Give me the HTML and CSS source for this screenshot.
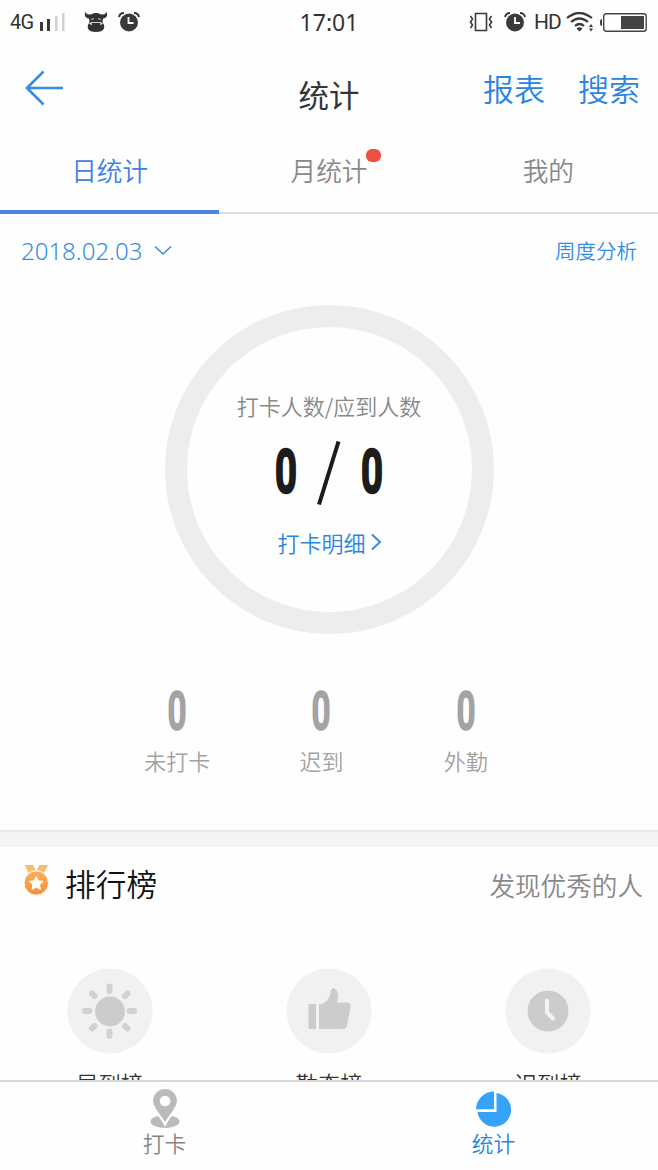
FILE: index.html
```html
<!DOCTYPE html>
<html lang="zh-CN">
<head>
<meta charset="utf-8">
<title>统计</title>
<link rel="stylesheet" href="styles.css">
</head>
<body>
<div class="app">
  <div class="status">
    <div class="status-side">
      <span class="net">4G</span>
      <svg class="signal" width="28" height="20" viewBox="0 0 28 20"><path fill="#3a3a3a" d="M1 10h3v9H1zM8 7h3v12H8z"/><path fill="#d0d0d0" d="M16 4h2.500v15H16zM23 1h2.500v18H23z"/></svg>
      <svg class="bull" width="24" height="22" viewBox="0 0 24 22"><path fill="#333" d="M1.500.500C0 4 1 7 5 7.500l.5 3.500-1.500 3C3 18 5 21 12 21s9-3 8-7l-1.500-3 .5-3.500c4-.5 5-3.500 3.500-7-.5 3-3 3-5.500 3-1.500-1-3-1.500-5-1.500s-3.500.5-5 1.500c-2.500 0-5 0-5.500-3z"/><path d="M7 8.500l3-1M14 7.500l3 1M7 11.500h10" stroke="#ccc" stroke-width="1"/><path d="M5 12l2.500-.5V14.500zM19 12l-2.500-.5V14.500z" fill="#fff"/></svg>
      <svg class="alarm" width="22" height="20" viewBox="0 0 22 20"><circle cx="11" cy="10.500" r="9" fill="#3a3a3a"/><path d="M1 5Q2 1 6 1M16 1q4 0 5 4" fill="none" stroke="#3a3a3a" stroke-width="2.200"/><path d="M10.500 5v6h5" fill="none" stroke="#fff" stroke-width="1.800"/></svg>
    </div>
    <span class="clock">17:01</span>
    <div class="status-side status-right">
      <svg class="vibrate" width="24" height="20" viewBox="0 0 24 20"><path d="M6.500 1.500h11v17h-11zM1.500 4l2 3-2 3 2 3-2 3M22.500 4l-2 3 2 3-2 3 2 3" fill="none" stroke="#3a3a3a" stroke-width="1.600"/></svg>
      <svg class="alarm-right" width="22" height="20" viewBox="0 0 22 20"><circle cx="11" cy="10.500" r="9" fill="#3a3a3a"/><path d="M1 5Q2 1 6 1M16 1q4 0 5 4" fill="none" stroke="#3a3a3a" stroke-width="2"/><path d="M11 5v6h5" fill="none" stroke="#fff" stroke-width="1.800"/></svg>
      <span class="hd">HD</span>
      <svg class="wifi" width="28" height="20" viewBox="0 0 28 20"><path d="M1 6Q13-4 26 6M5 10Q13.500 3 22 10M9 14q4.500-4 9 0" fill="none" stroke="#3a3a3a" stroke-width="2.200"/><path d="M10.500 16.500q3-2.500 6 0l-3 3zM23 15l2-3 2 3zM23 16.500l2 3 2-3z" fill="#3a3a3a"/></svg>
      <svg class="battery" width="47" height="19" viewBox="0 0 47 19"><rect x="3.700" y=".7" width="42.500" height="17.600" rx="2.500" fill="none" stroke="#444" stroke-width="1.400"/><path d="M21 3h23v13H21zM0 8q0-2 2-2v7q-2 0-2-2z" fill="#444"/></svg>
    </div>
  </div>

  <header class="header">
    <svg class="back" width="40" height="38" viewBox="0 0 40 38"><path d="M19.500 2.500L3 19l16.500 16.500M3 19h36" fill="none" stroke="#348ce3" stroke-width="2.600" stroke-linejoin="round"/></svg>
    <h1 class="title">统计</h1>
    <div class="actions"><span>报表</span><span>搜索</span></div>
  </header>

  <nav class="tabs">
    <div class="tab tab-active"><span>日统计</span></div>
    <div class="tab"><span class="tab-label">月统计<i class="dot"></i></span></div>
    <div class="tab"><span>我的</span></div>
  </nav>

  <div class="datebar">
    <span class="date">2018.02.03</span>
    <svg class="chevron" width="18" height="11" viewBox="0 0 18 11"><path d="M1 1.500l8 7.500 8-7.500" fill="none" stroke="#348ce3" stroke-width="1.500"/></svg>
    <span class="weekly">周度分析</span>
  </div>

  <section class="ring">
    <div class="ring-label">打卡人数/应到人数</div>
    <div class="ratio">
      <span class="num">0</span>
      <svg width="26" height="66" viewBox="0 0 26 66"><path d="M3 64.500L22.500 1.500" stroke="#1c1c1c" stroke-width="4"/></svg>
      <span class="num">0</span>
    </div>
    <div class="detail">打卡明细<svg width="12" height="18" viewBox="0 0 12 18"><path d="M2 1.500L10 9l-8 7.500" fill="none" stroke="#348ce3" stroke-width="2"/></svg></div>
  </section>

  <section class="counts">
    <div class="count"><span class="num num-small">0</span><span class="count-label">未打卡</span></div>
    <div class="count"><span class="num num-small">0</span><span class="count-label">迟到</span></div>
    <div class="count"><span class="num num-small">0</span><span class="count-label">外勤</span></div>
  </section>

  <div class="divider"></div>

  <section class="rank">
    <div class="rank-head">
      <svg class="medal" width="26" height="32" viewBox="0 0 26 32"><defs><linearGradient id="gold" x1="0" y1="0" x2="0" y2="1"><stop offset="0" stop-color="#f9b05c"/><stop offset="1" stop-color="#f98d38"/></linearGradient></defs><path d="M1.500 0h8.500l2.500 5-7 3zM25 0h-8.500l-2.500 5 7 3z" fill="#f8bd72"/><circle cx="13.300" cy="18" r="12.200" fill="url(#gold)" stroke="#fefefe" stroke-width="1"/><path d="M13.300 11.500l2 4.300 4.700.6-3.400 3.300.8 4.700-4.100-2.300-4.200 2.300.8-4.700-3.400-3.300 4.700-.6z" fill="#fff" stroke="#fff" stroke-linejoin="round"/></svg>
      <h2 class="rank-title">排行榜</h2>
      <span class="rank-note">发现优秀的人</span>
    </div>
    <div class="rank-list">
      <div class="rank-item">
        <svg width="86" height="86" viewBox="0 0 86 86"><circle cx="43" cy="43" r="42.500" fill="#f1f1f1"/><circle cx="43" cy="43.500" r="15" fill="#ccc"/><path d="M42.500 18.500v4.500M42.500 63.500v4.500M18 43h4.500M62.500 43H67M25 25.500l2.600 2.600M60.500 25.500l-2.600 2.600M25 60.500l2.600-2.600M60.500 60.500l-2.600-2.600" stroke="#d1d1d1" stroke-width="6" stroke-linecap="round"/></svg>
        <span>早到榜</span>
      </div>
      <div class="rank-item">
        <svg width="86" height="86" viewBox="0 0 86 86"><circle cx="43" cy="43" r="42.500" fill="#f1f1f1"/><path d="M23.500 36H29q1 0 1 1v24h-6.500q-1 0-1-1V37q0-1 1-1zM33 61V37q10.500-3 11.500-12 .5-5 3-5 5 2 4.500 9L51 34.500h10q4.500 0 3.500 5L61 57.500q-1 3.500-4 3.500z" fill="#ccc"/></svg>
        <span>勤奋榜</span>
      </div>
      <div class="rank-item">
        <svg width="86" height="86" viewBox="0 0 86 86"><circle cx="43" cy="43" r="42.500" fill="#f1f1f1"/><circle cx="43" cy="43" r="20.500" fill="#ccc"/><path d="M42 32.500v12l6 6" fill="none" stroke="#f3f3f3" stroke-width="4" stroke-linecap="round" stroke-linejoin="round"/></svg>
        <span>迟到榜</span>
      </div>
    </div>
  </section>

  <footer class="nav">
    <div class="nav-item">
      <svg width="32" height="42" viewBox="0 0 32 42"><ellipse cx="16" cy="34.500" rx="14.500" ry="6.500" fill="#b9babb"/><path d="M16 37.500C12 29 3 22 3 14a13 13 0 0 1 26 0C29 22 20 29 16 37.500z" fill="#b9babb" stroke="#fff" stroke-width="2.200"/><circle cx="16" cy="14" r="5.300" fill="#fff"/></svg>
      <span>打卡</span>
    </div>
    <div class="nav-item nav-active">
      <svg width="36" height="42" viewBox="0 0 36 42"><path d="M18 22.300H0A18 18 0 0 1 18 4.500z" fill="#36a3fb"/><path d="M20.500 6A16.900 16.900 0 1 1 1.500 25h19z" fill="#36a3fb"/></svg>
      <span>统计</span>
    </div>
  </footer>
</div>
</body>
</html>
```
FILE: styles.css
```css
* { box-sizing: border-box; }
body { margin: 0; background: #fefefe; font-family: "Noto Sans CJK SC", sans-serif; font-weight: 350; color: #333; }
svg { display: block; flex: none; }
h1, h2 { margin: 0; }
.app { width: 658px; height: 1170px; overflow: hidden; display: flex; flex-direction: column; }

.status { height: 44px; flex: none; display: grid; grid-template-columns: 1fr auto 1fr; align-items: center; padding: 0 10px; }
.status-side { display: flex; align-items: center; font-family: Roboto, sans-serif; font-weight: 400; }
.status-right { justify-content: flex-end; }
.net { font-size: 20px; letter-spacing: -0.8px; width: 29px; }
.signal { margin-right: 17px; }
.bull { margin-right: 10px; }
.clock { font-family: "Noto Sans", sans-serif; font-size: 23px; font-weight: 400; line-height: 44px; }
.vibrate { margin-right: 11px; }
.alarm-right { margin-right: 8px; }
.hd { font-size: 21px; width: 32px; letter-spacing: -1px; }
.wifi { margin-right: 6px; }
.battery { margin-right: 1px; }

.header { height: 86px; flex: none; display: grid; grid-template-columns: 1fr auto 1fr; padding: 0 18px 0 24px; }
.back { margin-top: 25px; }
.title { font-size: 30.5px; font-weight: 400; line-height: 100px; color: #333639; margin-right: 6px; }
.actions { display: flex; justify-content: flex-end; gap: 33px; font-size: 31px; line-height: 87px; color: #2b84e0; }

.tabs { height: 84px; flex: none; display: flex; border-bottom: 2px solid #dcdcdc; font-size: 25.700px; line-height: 79px; color: #888; }
.tab { flex: 1; height: 84px; text-align: center; }
.tab-active { color: #4380e2; border-bottom: 4px solid #4a86e3; }
.tab-label { position: relative; }
.dot { position: absolute; right: -13px; top: -2px; width: 15px; height: 13px; border-radius: 6px; background: #ef5040; }

.datebar { height: 72px; flex: none; display: flex; align-items: center; padding: 0 21px; color: #348ce3; }
.date { font-family: "Noto Sans", sans-serif; font-size: 24px; font-weight: 350; }
.chevron { margin-left: 12px; }
.weekly { margin-left: auto; font-size: 20.500px; }

.ring { width: 329px; height: 329px; flex: none; margin: 19px auto 0; border: 22px solid #ededed; border-radius: 50%; display: flex; flex-direction: column; align-items: center; }
.ring-label { margin-top: 61px; font-size: 22px; line-height: 34px; height: 34px; color: #888; white-space: nowrap; }
.ratio { display: flex; align-items: center; justify-content: space-between; width: 120px; height: 66px; margin-top: 18px; }
.num { width: 34px; text-align: center; font-family: Roboto, sans-serif; font-weight: 500; font-size: 60px; line-height: 64px; height: 66px; color: #1c1c1c; -webkit-text-stroke: 3.500px #1c1c1c; transform: scaleX(.63); }
.detail { display: flex; align-items: center; gap: 4px; font-size: 22px; line-height: 36px; margin-top: 18px; margin-left: 1px; color: #2b84e0; }

.counts { display: flex; height: 196px; flex: none; padding: 50px 120px 0 105px; }
.count { flex: 1; display: flex; flex-direction: column; align-items: center; }
.num-small { font-size: 52px; line-height: 56px; height: 56px; color: #a3a3a3; -webkit-text-stroke: 2.500px #a3a3a3; }
.count-label { font-size: 22px; line-height: 32px; margin-top: 4px; color: #a3a3a3; }

.divider { height: 17px; flex: none; background: #f4f4f4; border-top: 2px solid #e9e9e9; }

.rank { height: 233px; flex: none; overflow: hidden; }
.rank-head { height: 74px; display: flex; align-items: center; padding: 0 15px 0 23px; }
.medal { margin-top: -7px; }
.rank-title { font-size: 30.700px; font-weight: 350; color: #111; margin: -4px 0 0 16px; }
.rank-note { margin-left: auto; font-size: 25.600px; color: #888; }
.rank-list { display: flex; padding-top: 47px; }
.rank-item { flex: 1; display: flex; flex-direction: column; align-items: center; font-size: 22.400px; line-height: 32px; gap: 13px; color: #333; }

.nav { height: 90px; flex: none; display: flex; border-top: 2px solid #d8d8d8; background: #fefefe; }
.nav-item { flex: 1; display: flex; flex-direction: column; align-items: center; padding-top: 5px; font-size: 21.700px; line-height: 28px; color: #858585; }
.nav-active { color: #2b84e0; }
```
